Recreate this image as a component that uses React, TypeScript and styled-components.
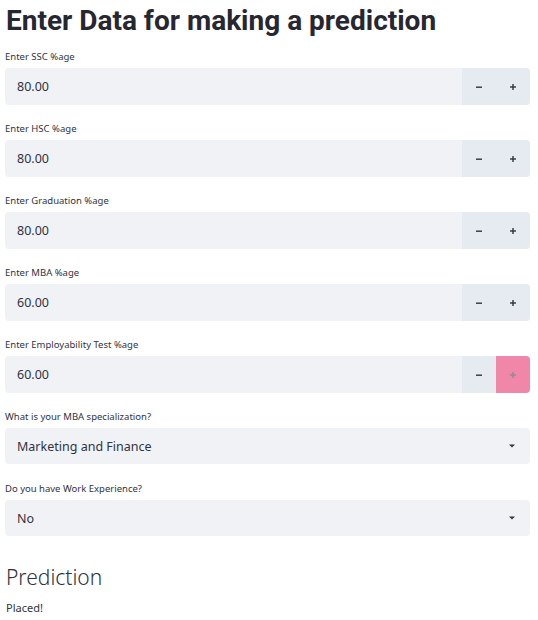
import React from "react";
import styled, { createGlobalStyle } from "styled-components";

const Global = createGlobalStyle`
  html, body { margin: 0; padding: 0; background: #ffffff; }
  body { font-family: "Noto Sans", "Open Sans", sans-serif; color: #31333f; }
`;

const Page = styled.main`
  padding: 3px 8px 0 5px;
  display: flex;
  flex-direction: column;
  width: 525px;
`;

const Title = styled.h1`
  margin: 0 0 11px 1px;
  font-family: Roboto, "Noto Sans", sans-serif;
  font-size: 28px;
  line-height: 36px;
  font-weight: 700;
  color: #262730;
`;

const Field = styled.div<{ $select?: boolean }>`
  display: flex;
  flex-direction: column;
  margin-bottom: ${(p) => (p.$select ? "18px" : "17px")};
`;

const Label = styled.label`
  font-size: 9.5px;
  line-height: 14px;
  margin-bottom: 4px;
  color: #31333f;
`;

const Box = styled.div<{ $select?: boolean }>`
  display: flex;
  height: ${(p) => (p.$select ? "36px" : "37px")};
  background: #f0f2f6;
  border-radius: 4px;
  overflow: hidden;
`;

const Value = styled.div`
  flex: 1;
  display: flex;
  align-items: center;
  padding-left: 12px;
  font-size: 12.5px;
  color: #31333f;
`;

const Step = styled.button<{ $active?: boolean }>`
  width: 34px;
  border: none;
  padding: 0;
  margin: 0;
  display: flex;
  align-items: center;
  justify-content: center;
  background: ${(p) => (p.$active ? "#f087a8" : "#e6eaf1")};
  color: ${(p) => (p.$active ? "#8c8c95" : "#31333f")};
`;

const Caret = styled.div`
  width: 36px;
  display: flex;
  align-items: center;
  justify-content: center;
`;

const Heading = styled.h2`
  margin: 8px 0 0 1px;
  font-size: 21px;
  line-height: 30px;
  font-weight: 300;
  color: #31333f;
`;

const Text = styled.p`
  margin: 8px 0 0 1px;
  font-size: 11px;
  line-height: 16px;
`;

const Minus = () => (
  <svg width="8" height="8" viewBox="0 0 8 8">
    <rect x="1" y="3.5" width="6" height="1.4" fill="currentColor" />
  </svg>
);

const Plus = () => (
  <svg width="8" height="8" viewBox="0 0 8 8">
    <rect x="1" y="3.3" width="6" height="1.4" fill="currentColor" />
    <rect x="3.3" y="1" width="1.4" height="6" fill="currentColor" />
  </svg>
);

const Down = () => (
  <svg width="8" height="6" viewBox="0 0 8 6">
    <path d="M1 1.5 L7 1.5 L4 4.5 Z" fill="#31333f" />
  </svg>
);

const numbers = [
  { label: "Enter SSC %age", value: "80.00" },
  { label: "Enter HSC %age", value: "80.00" },
  { label: "Enter Graduation %age", value: "80.00" },
  { label: "Enter MBA %age", value: "60.00" },
  { label: "Enter Employability Test %age", value: "60.00", active: true },
];

const selects = [
  { label: "What is your MBA specialization?", value: "Marketing and Finance" },
  { label: "Do you have Work Experience?", value: "No" },
];

export default function App() {
  return (
    <>
      <Global />
      <Page>
        <Title>Enter Data for making a prediction</Title>
        {numbers.map((n) => (
          <Field key={n.label}>
            <Label>{n.label}</Label>
            <Box>
              <Value>{n.value}</Value>
              <Step>
                <Minus />
              </Step>
              <Step $active={n.active}>
                <Plus />
              </Step>
            </Box>
          </Field>
        ))}
        {selects.map((s) => (
          <Field key={s.label} $select>
            <Label>{s.label}</Label>
            <Box $select>
              <Value>{s.value}</Value>
              <Caret>
                <Down />
              </Caret>
            </Box>
          </Field>
        ))}
        <Heading>Prediction</Heading>
        <Text>Placed!</Text>
      </Page>
    </>
  );
}
